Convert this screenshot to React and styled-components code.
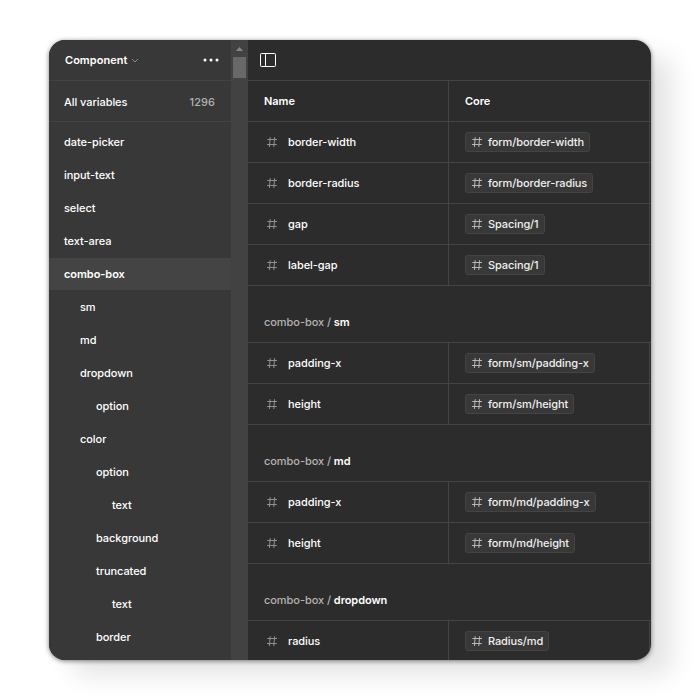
import React from "react";
import styled, { createGlobalStyle } from "styled-components";

const GlobalStyle = createGlobalStyle`
  body {
    margin: 0;
    background: #fff;
    font-family: Inter, sans-serif;
    font-size: 11px;
    font-weight: 500;
    line-height: 16px;
    letter-spacing: -0.06px;
    color: #fff;
  }
  * { box-sizing: border-box; }
`;

const Page = styled.div`
  width: 700px;
  height: 700px;
  padding: 40px 49px;
  overflow: hidden;
`;

const Window = styled.div`
  display: flex;
  width: 602px;
  height: 620px;
  overflow: hidden;
  border-radius: 16px;
  background: #2c2c2c;
  box-shadow: 0 1px 5px rgba(0, 0, 0, 0.5), 22px 16px 24px rgba(0, 0, 0, 0.1);
`;

const Sidebar = styled.aside`
  width: 182px;
  background: #383838;
`;

const SidebarHeader = styled.header`
  display: flex;
  align-items: center;
  height: 41px;
  padding: 0 12px 0 16px;
  border-bottom: 1px solid #444;
`;

const Title = styled.span`
  font-weight: 600;
  letter-spacing: 0.03px;
`;

const Chevron = styled.svg`
  margin: 1px 0 0 4px;
`;

const More = styled.svg`
  margin-left: auto;
`;

const AllVariables = styled.div`
  display: flex;
  align-items: center;
  justify-content: space-between;
  height: 41px;
  padding: 2px 16px 0 15px;
  border-bottom: 1px solid #444;
`;

const Count = styled.span`
  color: #b3b3b3;
  letter-spacing: 0.055px;
`;

const Tree = styled.nav`
  display: flex;
  flex-direction: column;
  gap: 1px;
  padding-top: 4px;
`;

const TreeItem = styled.div`
  height: 32px;
  padding-left: ${(p) => 15 + p.$depth * 16}px;
  line-height: 32px;
  font-weight: ${(p) => (p.$active ? 600 : 500)};
  background: ${(p) => (p.$active ? "#444" : "transparent")};
`;

const Scrollbar = styled.div`
  display: flex;
  flex-direction: column;
  align-items: center;
  width: 17px;
  background: #424242;
`;

const ScrollArrow = styled.svg`
  display: block;
`;

const ScrollThumb = styled.div`
  width: 13px;
  height: 21px;
  background: #686868;
`;

const Main = styled.main`
  width: 403px;
`;

const Toolbar = styled.div`
  display: flex;
  align-items: center;
  height: 41px;
  padding-left: 12px;
  border-bottom: 1px solid #444;
`;

const Row = styled.div`
  display: grid;
  grid-template-columns: 201px 201px 1fr;
  height: 41px;
  border-bottom: 1px solid #444;
`;

const Cell = styled.div`
  display: flex;
  align-items: center;
  padding-left: 16px;
  border-right: 1px solid #444;
  font-weight: ${(p) => (p.$heading ? 600 : 500)};
`;

const NameHash = styled.svg`
  margin-right: 8px;
`;

const Chip = styled.span`
  display: flex;
  align-items: center;
  height: 20px;
  padding: 0 5px 0 3px;
  border: 1px solid #444;
  border-radius: 3px;
  background: #383838;
  color: #f0f0f0;
  letter-spacing: -0.1px;
`;

const ChipHash = styled.svg`
  margin-right: 3px;
`;

const Group = styled.div`
  height: 57px;
  padding: 28px 16px 0;
  border-bottom: 1px solid #444;
  color: #b3b3b3;
`;

const GroupName = styled.span`
  color: #fff;
  font-weight: 600;
`;

const tree = [
  ["date-picker", 0],
  ["input-text", 0],
  ["select", 0],
  ["text-area", 0],
  ["combo-box", 0, true],
  ["sm", 1],
  ["md", 1],
  ["dropdown", 1],
  ["option", 2],
  ["color", 1],
  ["option", 2],
  ["text", 3],
  ["background", 2],
  ["truncated", 2],
  ["text", 3],
  ["border", 2],
];

const sections = [
  {
    rows: [
      ["border-width", "form/border-width"],
      ["border-radius", "form/border-radius"],
      ["gap", "Spacing/1"],
      ["label-gap", "Spacing/1"],
    ],
  },
  {
    group: "sm",
    rows: [
      ["padding-x", "form/sm/padding-x"],
      ["height", "form/sm/height"],
    ],
  },
  {
    group: "md",
    rows: [
      ["padding-x", "form/md/padding-x"],
      ["height", "form/md/height"],
    ],
  },
  { group: "dropdown", rows: [["radius", "Radius/md"]] },
];

const Hash = ({ as: Svg, color }) => (
  <Svg width="16" height="16" viewBox="0 0 16 16" fill="none" stroke={color}>
    <path d="M3.3 5.5H13M3 10.5h9.7M6.2 3.2L5.4 13M10.6 3.2L9.8 13" />
  </Svg>
);

export default function App() {
  return (
    <Page>
      <GlobalStyle />
      <Window>
        <Sidebar>
          <SidebarHeader>
            <Title>Component</Title>
            <Chevron width="8" height="6" viewBox="0 0 8 6" fill="none" stroke="#8a8a8a">
              <path d="M1 1l3 3 3-3" />
            </Chevron>
            <More width="16" height="4" viewBox="0 0 16 4" fill="#fff">
              <circle cx="2" cy="2" r="1.5" />
              <circle cx="8" cy="2" r="1.5" />
              <circle cx="14" cy="2" r="1.5" />
            </More>
          </SidebarHeader>
          <AllVariables>
            <span>All variables</span>
            <Count>1296</Count>
          </AllVariables>
          <Tree>
            {tree.map(([label, depth, active], i) => (
              <TreeItem key={i} $depth={depth} $active={active}>
                {label}
              </TreeItem>
            ))}
          </Tree>
        </Sidebar>
        <Scrollbar>
          <ScrollArrow width="17" height="17" viewBox="0 0 17 17" fill="#868686">
            <path d="M5 11l3.5-4 3.5 4z" />
          </ScrollArrow>
          <ScrollThumb />
        </Scrollbar>
        <Main>
          <Toolbar>
            <svg width="16" height="16" viewBox="0 0 16 16" fill="none" stroke="#fff">
              <rect x="0.5" y="1.5" width="15" height="13" rx="0.8" />
              <path d="M5.5 1.5v13" />
            </svg>
          </Toolbar>
          <Row>
            <Cell $heading>Name</Cell>
            <Cell $heading>Core</Cell>
          </Row>
          {sections.map(({ group, rows }) => (
            <React.Fragment key={group || "base"}>
              {group && (
                <Group>
                  combo-box / <GroupName>{group}</GroupName>
                </Group>
              )}
              {rows.map(([name, value]) => (
                <Row key={name}>
                  <Cell>
                    <Hash as={NameHash} color="#919191" />
                    {name}
                  </Cell>
                  <Cell>
                    <Chip>
                      <Hash as={ChipHash} color="#b8b8b8" />
                      {value}
                    </Chip>
                  </Cell>
                </Row>
              ))}
            </React.Fragment>
          ))}
        </Main>
      </Window>
    </Page>
  );
}
